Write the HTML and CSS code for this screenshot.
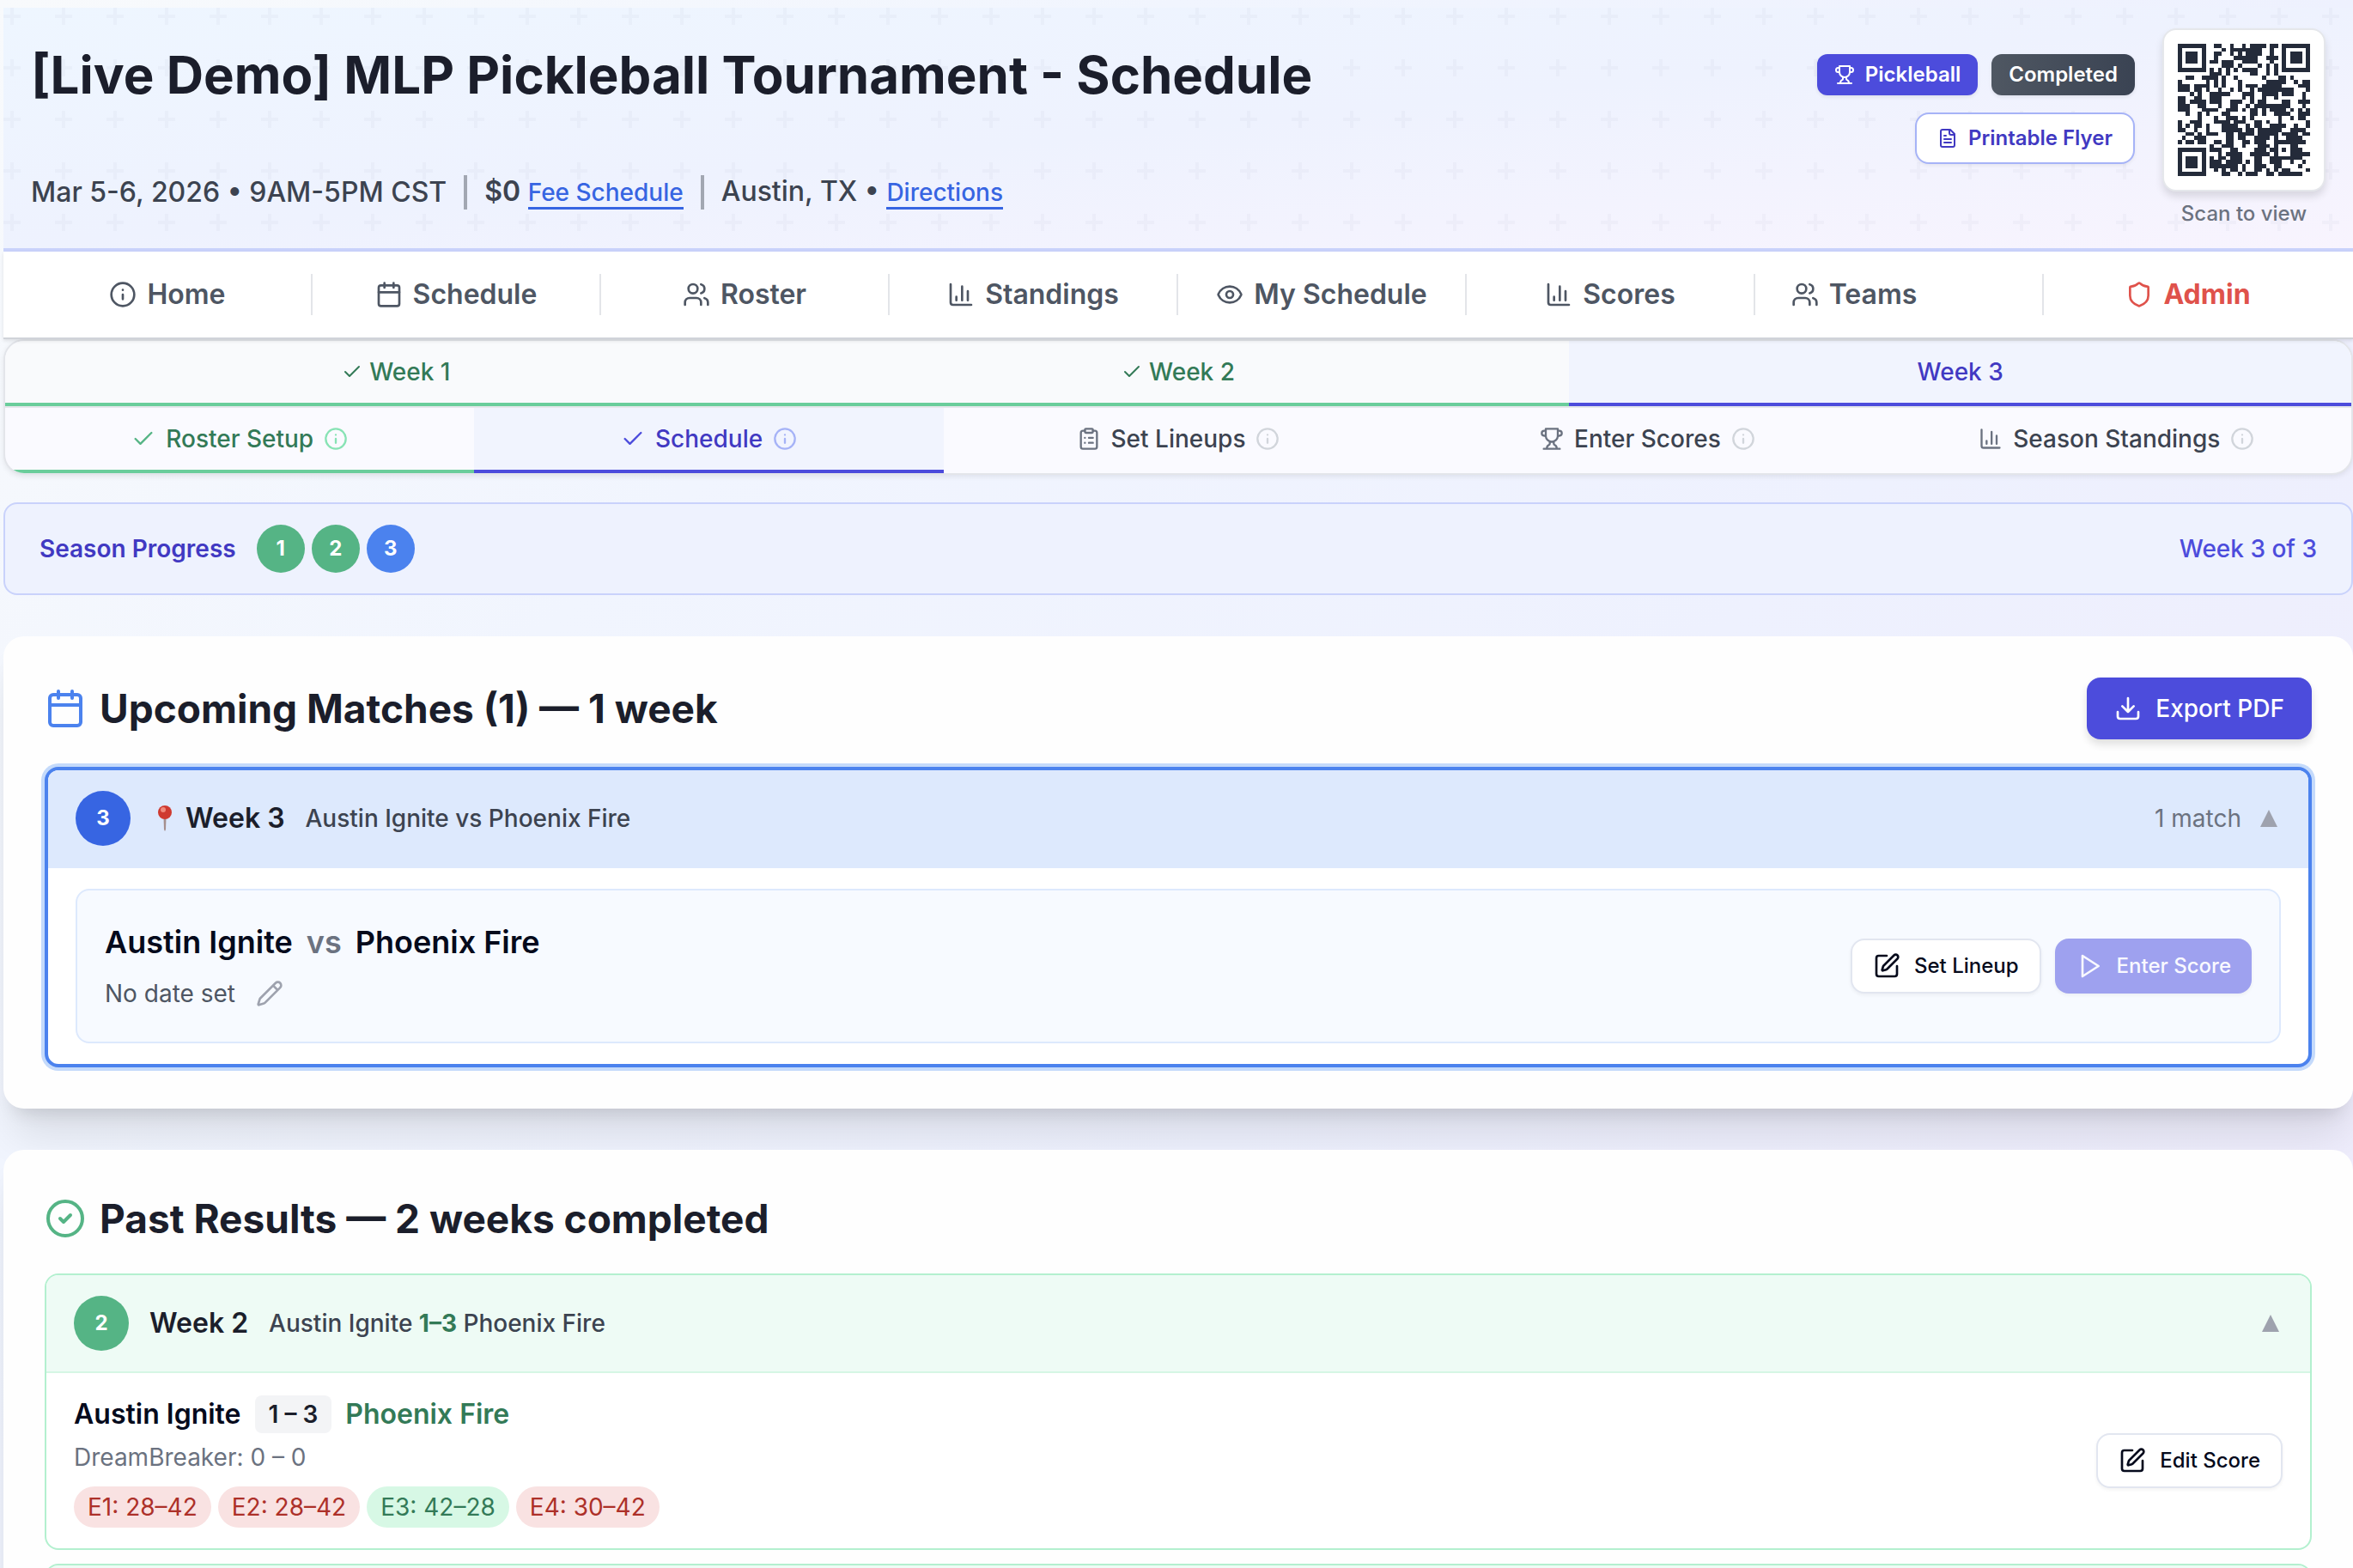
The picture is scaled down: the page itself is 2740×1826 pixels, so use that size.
FILE: index.html
```
<!DOCTYPE html>
<html lang="en">
<head>
    <meta charset="UTF-8">
    <meta name="viewport" content="width=device-width, initial-scale=1.0">
    <title>[Live Demo] MLP Pickleball Tournament - Schedule</title>
    <link rel="stylesheet" href="styles.css">
</head>
<body>
    <!-- Icon sprite -->
    <svg class="sprite" aria-hidden="true">
        <symbol id="i-info" viewBox="0 0 24 24"><circle cx="12" cy="12" r="10"/><path d="M12 16v-4M12 8h.01"/></symbol>
        <symbol id="i-calendar" viewBox="0 0 24 24"><path d="M8 2v4M16 2v4M3 10h18"/><rect x="3" y="4" width="18" height="18" rx="2"/></symbol>
        <symbol id="i-users" viewBox="0 0 24 24"><path d="M16 21v-2a4 4 0 0 0-4-4H6a4 4 0 0 0-4 4v2M22 21v-2a4 4 0 0 0-3-3.87M16 3.13a4 4 0 0 1 0 7.75"/><circle cx="9" cy="7" r="4"/></symbol>
        <symbol id="i-chart" viewBox="0 0 24 24"><path d="M3 3v16a2 2 0 0 0 2 2h16M18 17V9M13 17V5M8 17v-3"/></symbol>
        <symbol id="i-eye" viewBox="0 0 24 24"><path d="M2.062 12.348a1 1 0 0 1 0-.696 10.75 10.75 0 0 1 19.876 0 1 1 0 0 1 0 .696 10.75 10.75 0 0 1-19.876 0"/><circle cx="12" cy="12" r="3"/></symbol>
        <symbol id="i-shield" viewBox="0 0 24 24"><path d="M20 13c0 5-3.5 7.5-7.66 8.95a1 1 0 0 1-.67-.01C7.5 20.5 4 18 4 13V6a1 1 0 0 1 1-1c2 0 4.5-1.2 6.24-2.72a1.17 1.17 0 0 1 1.52 0C14.51 3.81 17 5 19 5a1 1 0 0 1 1 1z"/></symbol>
        <symbol id="i-check" viewBox="0 0 24 24"><path d="M20 6 9 17l-5-5"/></symbol>
        <symbol id="i-clipboard" viewBox="0 0 24 24"><rect x="8" y="2" width="8" height="4" rx="1"/><path d="M16 4h2a2 2 0 0 1 2 2v14a2 2 0 0 1-2 2H6a2 2 0 0 1-2-2V6a2 2 0 0 1 2-2h2M12 11h4M12 16h4M8 11h.01M8 16h.01"/></symbol>
        <symbol id="i-trophy" viewBox="0 0 24 24"><path d="M6 9H4.500a2.500 2.500 0 0 1 0-5H6M18 9h1.500a2.500 2.500 0 0 0 0-5H18M4 22h16M10 14.660V17c0 .55-.47.98-.97 1.210C7.850 18.750 7 20.240 7 22M14 14.660V17c0 .55.47.98.97 1.210C16.150 18.750 17 20.240 17 22M18 2H6v7a6 6 0 0 0 12 0V2Z"/></symbol>
        <symbol id="i-file" viewBox="0 0 24 24"><path d="M15 2H6a2 2 0 0 0-2 2v16a2 2 0 0 0 2 2h12a2 2 0 0 0 2-2V7ZM14 2v4a2 2 0 0 0 2 2h4M10 9H8M16 13H8M16 17H8"/></symbol>
        <symbol id="i-download" viewBox="0 0 24 24"><path d="M21 15v4a2 2 0 0 1-2 2H5a2 2 0 0 1-2-2v-4M7 10l5 5 5-5M12 15V3"/></symbol>
        <symbol id="i-edit" viewBox="0 0 24 24"><path d="M12 3H5a2 2 0 0 0-2 2v14a2 2 0 0 0 2 2h14a2 2 0 0 0 2-2v-7M18.375 2.625a1 1 0 0 1 3 3l-9.013 9.014a2 2 0 0 1-.853.505l-2.873.84a.5.5 0 0 1-.62-.62l.84-2.873a2 2 0 0 1 .506-.852z"/></symbol>
        <symbol id="i-pencil" viewBox="0 0 24 24"><path d="M21.174 6.812a1 1 0 0 0-3.986-3.987L3.842 16.174a2 2 0 0 0-.5.83l-1.321 4.352a.5.5 0 0 0 .623.622l4.353-1.320a2 2 0 0 0 .83-.497zM15 5l4 4"/></symbol>
        <symbol id="i-play" viewBox="0 0 24 24"><path d="m6 3 14 9-14 9z"/></symbol>
        <symbol id="i-done" viewBox="0 0 24 24"><circle cx="12" cy="12" r="10"/><path d="m9 12 2 2 4-4"/></symbol>
        <symbol id="i-up" viewBox="0 0 28 28"><path d="M14 4 24 24H4z" fill="currentColor" stroke="none"/></symbol>
    </svg>

    <header class="header">
        <div class="header-info">
            <h1 class="title">[Live Demo] MLP Pickleball Tournament - Schedule</h1>
            <div class="details">
                <span>Mar 5-6, 2026 • 9AM-5PM CST</span>
                <span class="bar"></span>
                <span><span class="fee">$0</span> <a class="link" href="#fees">Fee Schedule</a></span>
                <span class="bar"></span>
                <span>Austin, TX • <a class="link" href="#directions">Directions</a></span>
            </div>
        </div>
        <div class="header-side">
            <div class="badges">
                <div class="badge-row">
                    <span class="badge badge-sport"><svg class="icon icon-sm"><use href="#i-trophy"/></svg>Pickleball</span>
                    <span class="badge badge-done">Completed</span>
                </div>
                <a class="flyer" href="#flyer"><svg class="icon icon-sm"><use href="#i-file"/></svg>Printable Flyer</a>
            </div>
            <div class="qr">
                <div class="qr-box">
                    <svg class="qr-code" viewBox="0 0 33 33" shape-rendering="crispEdges" role="img" aria-label="QR code">
                        <path class="qr-eye" d="M.5 .5h6v6h-6zM26.5 .5h6v6h-6zM.5 26.5h6v6h-6zM24.500 24.500h4v4h-4z"/>
                        <path class="qr-dot" d="M2 2h3v3H2zM28 2h3v3h-3zM2 28h3v3H2zM26 26h1v1h-1z"/>
                        <path class="qr-eye" transform="translate(0 .5)" d="M9 0h2M13 0h1M16 0h1M18 0h4M23 0h2
                            M11 1h1M13 1h8M23 1h1
                            M9 2h2M13 2h1M15 2h1M17 2h4M23 2h1
                            M9 3h1M14 3h6M22 3h3
                            M8 4h2M11 4h3M16 4h4M23 4h1
                            M11 5h3M15 5h1M20 5h1M22 5h1M24 5h1
                            M8 6h1M10 6h1M12 6h1M14 6h1M16 6h4M22 6h1M24 6h1
                            M8 7h2M10 7h1M12 7h1M18 7h2M22 7h1M24 7h1
                            M2 8h2M6 8h4M11 8h1M14 8h1M21 8h1M25 8h2M28 8h1
                            M0 9h1M7 9h1M9 9h1M11 9h1M15 9h1M22 9h5M29 9h1M31 9h2
                            M0 10h3M4 10h4M9 10h1M11 10h1M15 10h1M17 10h3M21 10h5M30 10h3
                            M0 11h3M4 11h2M7 11h1M10 11h1M13 11h1M15 11h1M18 11h1M20 11h9M32 11h1
                            M3 12h1M5 12h1M8 12h3M11 12h2M16 12h3M21 12h4M26 12h3M31 12h1
                            M0 13h2M4 13h2M8 13h3M16 13h1M18 13h1M21 13h1M24 13h1M31 13h1
                            M0 14h2M3 14h4M8 14h3M13 14h3M18 14h1M20 14h2M26 14h2M30 14h3
                            M0 15h3M5 15h2M10 15h1M13 15h2M17 15h1M19 15h9M31 15h1
                            M0 16h3M6 16h4M12 16h3M16 16h1M18 16h2M21 16h1M23 16h4M28 16h1M30 16h1M32 16h1
                            M2 17h1M5 17h1M7 17h1M11 17h2M18 17h2M21 17h1M24 17h4M30 17h3
                            M5 18h1M9 18h1M12 18h3M16 18h1M18 18h1M25 18h1M28 18h1M30 18h2
                            M0 19h1M3 19h3M9 19h4M14 19h3M19 19h2M22 19h1M25 19h1M32 19h1
                            M0 20h1M2 20h1M4 20h2M7 20h1M11 20h4M17 20h1M19 20h2M23 20h4M29 20h1M32 20h1
                            M0 21h2M4 21h1M7 21h1M11 21h4M15 21h1M17 21h2M20 21h6M28 21h4
                            M2 22h2M5 22h1M7 22h3M12 22h2M15 22h4M20 22h5M26 22h4M31 22h2
                            M1 23h1M4 23h3M12 23h2M15 23h2M19 23h4M24 23h1M27 23h4
                            M0 24h1M2 24h2M5 24h2M9 24h2M12 24h2M16 24h2M19 24h3M29 24h3
                            M8 25h1M11 25h3M16 25h1M20 25h3M29 25h1
                            M8 26h2M10 26h1M13 26h2M19 26h3M23 26h1M29 26h2
                            M10 27h1M12 27h4M18 27h5M29 27h4
                            M8 28h1M10 28h2M13 28h3M19 28h2M23 28h1M29 28h2
                            M8 29h3M12 29h4M17 29h1M19 29h2M23 29h3M28 29h1M31 29h1
                            M8 30h3M11 30h4M16 30h1M19 30h3M24 30h2M30 30h1
                            M9 31h1M11 31h1M13 31h2M16 31h1M19 31h2M22 31h1M24 31h1M26 31h2M32 31h1
                            M11 32h2M15 32h1M17 32h3M22 32h2M25 32h6"/>
                    </svg>
                </div>
                <span class="qr-label">Scan to view</span>
            </div>
        </div>
    </header>

    <nav class="nav">
        <a class="nav-item" href="#home"><svg class="icon icon-lg"><use href="#i-info"/></svg>Home</a>
        <a class="nav-item" href="#schedule"><svg class="icon icon-lg"><use href="#i-calendar"/></svg>Schedule</a>
        <a class="nav-item" href="#roster"><svg class="icon icon-lg"><use href="#i-users"/></svg>Roster</a>
        <a class="nav-item" href="#standings"><svg class="icon icon-lg"><use href="#i-chart"/></svg>Standings</a>
        <a class="nav-item" href="#my-schedule"><svg class="icon icon-lg"><use href="#i-eye"/></svg>My Schedule</a>
        <a class="nav-item" href="#scores"><svg class="icon icon-lg"><use href="#i-chart"/></svg>Scores</a>
        <a class="nav-item nav-teams" href="#teams"><svg class="icon icon-lg"><use href="#i-users"/></svg>Teams</a>
        <a class="nav-item nav-admin" href="#admin"><svg class="icon icon-lg"><use href="#i-shield"/></svg>Admin</a>
    </nav>

    <main class="main">
        <section class="steps">
            <div class="weeks">
                <button class="week done"><svg class="icon icon-sm"><use href="#i-check"/></svg>Week 1</button>
                <button class="week done"><svg class="icon icon-sm"><use href="#i-check"/></svg>Week 2</button>
                <button class="week active">Week 3</button>
            </div>
            <div class="tabs">
                <button class="tab done"><svg class="icon icon-md"><use href="#i-check"/></svg>Roster Setup<svg class="icon icon-md hint"><use href="#i-info"/></svg></button>
                <button class="tab active"><svg class="icon icon-md"><use href="#i-check"/></svg>Schedule<svg class="icon icon-md hint"><use href="#i-info"/></svg></button>
                <button class="tab"><svg class="icon icon-md"><use href="#i-clipboard"/></svg>Set Lineups<svg class="icon icon-md hint"><use href="#i-info"/></svg></button>
                <button class="tab"><svg class="icon icon-md"><use href="#i-trophy"/></svg>Enter Scores<svg class="icon icon-md hint"><use href="#i-info"/></svg></button>
                <button class="tab"><svg class="icon icon-md"><use href="#i-chart"/></svg>Season Standings<svg class="icon icon-md hint"><use href="#i-info"/></svg></button>
            </div>
        </section>

        <section class="progress">
            <span class="progress-label">Season Progress</span>
            <span class="dots">
                <span class="dot">1</span>
                <span class="dot">2</span>
                <span class="dot dot-current">3</span>
            </span>
            <span class="progress-count">Week 3 of 3</span>
        </section>

        <!-- Upcoming -->
        <section class="card">
            <div class="card-head">
                <h2 class="card-title"><svg class="icon icon-xl blue"><use href="#i-calendar"/></svg>Upcoming Matches (1) — 1 week</h2>
                <button class="btn-export"><svg class="icon icon-lg"><use href="#i-download"/></svg>Export PDF</button>
            </div>
            <div class="group group-current">
                <button class="group-head">
                    <span class="number">3</span>
                    <span class="group-name">
                        <svg class="pin" viewBox="0 0 32 32">
                            <path d="M14.500 15h3l-.5 14-1 2-1-2z" fill="#a58f8d"/>
                            <circle cx="16" cy="9" r="8" fill="#cf3a30"/>
                            <circle cx="14" cy="6" r="3" fill="#f08a7c"/>
                        </svg>Week 3</span>
                    <span class="group-text">Austin Ignite vs Phoenix Fire</span>
                    <span class="group-side">1 match <svg class="icon icon-md caret"><use href="#i-up"/></svg></span>
                </button>
                <div class="group-body">
                    <div class="match">
                        <div>
                            <div class="teams"><span>Austin Ignite</span><span class="vs">vs</span><span>Phoenix Fire</span></div>
                            <div class="date">No date set <button class="btn-icon" aria-label="Edit date"><svg class="icon icon-lg"><use href="#i-pencil"/></svg></button></div>
                        </div>
                        <div class="actions">
                            <button class="btn"><svg class="icon icon-lg"><use href="#i-edit"/></svg>Set Lineup</button>
                            <button class="btn btn-score" disabled><svg class="icon icon-lg"><use href="#i-play"/></svg>Enter Score</button>
                        </div>
                    </div>
                </div>
            </div>
        </section>

        <!-- Past results -->
        <section class="card">
            <div class="card-head">
                <h2 class="card-title"><svg class="icon icon-xl green"><use href="#i-done"/></svg>Past Results — 2 weeks completed</h2>
            </div>
            <div class="group group-past">
                <button class="group-head">
                    <span class="number">2</span>
                    <span class="group-name">Week 2</span>
                    <span class="group-text">Austin Ignite <b>1–3</b> Phoenix Fire</span>
                    <span class="group-side"><svg class="icon icon-md caret"><use href="#i-up"/></svg></span>
                </button>
                <div class="result">
                    <div>
                        <div class="result-teams"><span>Austin Ignite</span><span class="score">1 – 3</span><span class="winner">Phoenix Fire</span></div>
                        <div class="breaker">DreamBreaker: 0 – 0</div>
                        <div class="pills">
                            <span class="pill">E1: 28–42</span>
                            <span class="pill">E2: 28–42</span>
                            <span class="pill pill-won">E3: 42–28</span>
                            <span class="pill">E4: 30–42</span>
                        </div>
                    </div>
                    <button class="btn"><svg class="icon icon-lg"><use href="#i-edit"/></svg>Edit Score</button>
                </div>
            </div>
            <div class="group group-past">
                <button class="group-head" aria-label="Next week">
                    <span class="number"></span>
                </button>
            </div>
        </section>
    </main>
</body>
</html>
```
FILE: styles.css
```
* {
    margin: 0;
    padding: 0;
    box-sizing: border-box;
}

body {
    font-family: Inter, "Liberation Sans", sans-serif;
    font-size: 28px;
    line-height: 40px;
    color: #1b1e2b;
    background: linear-gradient(135deg, #f8fafc, #f1f5fe 30%, #eef1fe 60%, #eeebfb);
    height: 100vh;
    overflow: hidden;
    padding: 9px 0 0 4px;
}

button {
    font: inherit;
    color: inherit;
    border: none;
    background: none;
    cursor: pointer;
}

a {
    text-decoration: none;
}

.sprite {
    display: none;
}

.icon {
    flex-shrink: 0;
    fill: none;
    stroke: currentColor;
    stroke-width: 2;
    stroke-linecap: round;
    stroke-linejoin: round;
}

.icon-sm { width: 24px; height: 24px; }
.icon-md { width: 28px; height: 28px; }
.icon-lg { width: 32px; height: 32px; }
.icon-xl { width: 48px; height: 48px; }

.blue { color: #4b82ee; }
.green { color: #55b485; }

/* Header */
.header {
    display: flex;
    justify-content: space-between;
    padding: 24px 32px;
    border-bottom: 4px solid #c9d2fb;
    background:
        url("data:image/svg+xml,%3Csvg xmlns='http://www.w3.org/2000/svg' width='60' height='60'%3E%3Cpath d='M8 0h4v8h8v4h-8v8H8v-8H0V8h8z' fill='%23787896' fill-opacity='.05'/%3E%3C/svg%3E"),
        linear-gradient(to bottom right, #eef6ff, #eef2fe 50%, #f8f4fe);
}

.title {
    font-size: 60px;
    line-height: 108px;
    font-weight: 700;
}

.details {
    display: flex;
    align-items: center;
    gap: 20px;
    margin-top: 58px;
    font-size: 32px;
    line-height: 48px;
    font-weight: 500;
    color: #3c4350;
}

.fee {
    font-weight: 600;
}

.bar {
    width: 4px;
    height: 40px;
    background-color: #a2a7b2;
}

.link {
    font-size: 28px;
    color: #3765e2;
    border-bottom: 3px solid #3765e2;
}

.header-side {
    display: flex;
    gap: 32px;
}

.badges {
    display: flex;
    flex-direction: column;
    align-items: flex-end;
    gap: 20px;
    padding-top: 30px;
}

.badge-row {
    display: flex;
    gap: 16px;
}

.badge,
.flyer {
    display: flex;
    align-items: center;
    gap: 12px;
    font-size: 24px;
    line-height: 32px;
    font-weight: 600;
}

.badge {
    padding: 8px 20px;
    border-radius: 12px;
    color: #fff;
    box-shadow: 0 2px 4px rgba(0, 0, 0, 0.08);
}

.badge-sport {
    background-color: #4c4cdc;
}

.badge-done {
    background: linear-gradient(to right, #4f5762, #3a4353);
}

.flyer {
    padding: 12px 24px;
    border: 2px solid #a6b3f7;
    border-radius: 16px;
    background-color: #fff;
    color: #4139c2;
    box-shadow: 0 2px 4px rgba(0, 0, 0, 0.06);
}

.qr {
    display: flex;
    flex-direction: column;
    align-items: center;
    gap: 10px;
}

.qr-box {
    padding: 16px;
    border: 2px solid #e5e7eb;
    border-radius: 16px;
    background-color: #fff;
    box-shadow: 0 6px 10px rgba(0, 0, 0, 0.12);
}

.qr-code {
    display: block;
    width: 154px;
    height: 154px;
}

.qr-eye {
    fill: none;
    stroke: #242b3a;
    stroke-width: 1;
}

.qr-dot {
    fill: #242b3a;
}

.qr-label {
    font-size: 24px;
    line-height: 32px;
    font-weight: 500;
    color: #6b7280;
}

/* Navigation */
.nav {
    display: grid;
    grid-template-columns: repeat(8, 1fr);
    padding: 26px 24px;
    background-color: #fff;
    border-bottom: 2px solid #d0d3d9;
    box-shadow: 0 2px 4px rgba(0, 0, 0, 0.1);
    position: relative;
}

.nav-item {
    display: flex;
    align-items: center;
    justify-content: center;
    gap: 12px;
    font-size: 32px;
    line-height: 48px;
    font-weight: 600;
    color: #4e5663;
    border-right: 2px solid #e3e5e9;
}

.nav-teams {
    padding-right: 104px;
}

.nav-admin {
    color: #df524b;
    font-weight: 700;
    border-right: none;
}

/* Week and step tabs */
.steps {
    border: 2px solid #e3e5ea;
    border-radius: 24px;
    overflow: hidden;
    background-color: #fafaff;
    box-shadow: 0 2px 6px rgba(0, 0, 0, 0.08);
}

.weeks {
    display: grid;
    grid-template-columns: repeat(3, 1fr);
    background-color: #f9fafc;
    border-bottom: 2px solid #e5e7eb;
}

.tabs {
    display: grid;
    grid-template-columns: repeat(5, 1fr);
}

.week,
.tab {
    display: flex;
    align-items: center;
    justify-content: center;
    gap: 12px;
    padding: 16px;
    font-weight: 500;
    color: #3c4350;
    border-bottom: 4px solid transparent;
}

.week {
    gap: 8px;
}

.tab .icon {
    color: #6b7280;
}

.tab .hint {
    color: #d1d5db;
}

.week.done,
.tab.done {
    color: #337a57;
    border-bottom-color: #6acd9b;
}

.week.active,
.tab.active {
    color: #4139c2;
    border-bottom-color: #4c4cdc;
    background-color: #f1f4fe;
}

.tab.done .icon { color: #55b485; }
.tab.done .hint { color: #88e3b5; }
.tab.active .icon { color: #4c4cdc; }
.tab.active .hint { color: #a6b3f7; }

/* Season progress */
.progress {
    display: flex;
    align-items: center;
    gap: 24px;
    margin-top: 32px;
    padding: 24px 40px;
    border: 2px solid #c9d2fb;
    border-radius: 16px;
    background-color: #eef2fe;
    font-weight: 500;
    color: #4c4cdc;
}

.progress-label {
    font-weight: 600;
    color: #4139c2;
}

.dots {
    display: flex;
    gap: 8px;
}

.dot,
.number {
    display: flex;
    align-items: center;
    justify-content: center;
    border-radius: 50%;
    font-size: 24px;
    font-weight: 700;
    color: #fff;
    background-color: #55b485;
}

.dot {
    width: 56px;
    height: 56px;
}

.dot-current {
    background-color: #4b82ee;
}

.progress-count {
    margin-left: auto;
}

/* Cards */
.card {
    margin-top: 48px;
    padding: 48px;
    border-radius: 24px;
    background-color: #fefefe;
    box-shadow: 0 40px 50px -10px rgba(0, 0, 0, 0.1), 0 16px 20px -12px rgba(0, 0, 0, 0.12);
}

.card-head {
    display: flex;
    align-items: center;
    justify-content: space-between;
    margin-bottom: 32px;
}

.card-title {
    display: flex;
    align-items: center;
    gap: 16px;
    font-size: 46px;
    line-height: 64px;
    font-weight: 700;
}

.btn-export {
    display: flex;
    align-items: center;
    gap: 16px;
    padding: 16px 32px;
    border-radius: 16px;
    background-color: #4c4cdc;
    color: #fff;
    font-weight: 500;
    box-shadow: 0 6px 10px rgba(0, 0, 0, 0.12);
}

.group {
    border: 2px solid #b3f0cf;
    border-radius: 16px;
    overflow: hidden;
    background-color: #fff;
}

.group + .group {
    margin-top: 16px;
}

.group-current {
    border: 4px solid #4b82ee;
    box-shadow: 0 0 0 4px #c4dafb;
}

.group-head {
    display: flex;
    align-items: center;
    gap: 24px;
    width: 100%;
    padding: 24px 32px;
    text-align: left;
    background-color: #eefbf5;
    border-bottom: 2px solid #d5f6e4;
}

.group-current .group-head {
    background-color: #dde9fd;
    border-bottom-color: #dde9fd;
}

.number {
    width: 64px;
    height: 64px;
}

.group-current .number {
    background-color: #3765e2;
}

.group-name {
    display: flex;
    align-items: center;
    gap: 8px;
    font-size: 32px;
    font-weight: 600;
}

.pin {
    width: 32px;
    height: 32px;
}

.group-text {
    font-weight: 500;
    color: #3c4350;
}

.group-text b {
    color: #337a57;
}

.group-side {
    display: flex;
    align-items: center;
    gap: 18px;
    margin-left: auto;
    color: #6b7280;
}

.caret {
    color: #9ea2ae;
}

.group-body {
    padding: 24px 32px;
}

.match {
    display: flex;
    align-items: center;
    justify-content: space-between;
    padding: 32px;
    border: 2px solid #dde9fd;
    border-radius: 16px;
    background-color: #f7faff;
}

.teams {
    display: flex;
    gap: 16px;
    font-size: 36px;
    line-height: 56px;
    font-weight: 600;
    color: #050a1c;
}

.vs {
    color: #6b7280;
}

.date {
    display: flex;
    align-items: center;
    gap: 16px;
    margin-top: 8px;
    color: #4e5663;
}

.btn-icon {
    display: flex;
    padding: 8px;
    color: #9ea2ae;
}

.actions {
    display: flex;
    gap: 16px;
}

.btn {
    display: flex;
    align-items: center;
    gap: 16px;
    padding: 14px 24px;
    border: 2px solid #e2e6f0;
    border-radius: 16px;
    background-color: #fff;
    color: #050a1c;
    font-size: 24px;
    line-height: 32px;
    font-weight: 500;
    box-shadow: 0 2px 4px rgba(0, 0, 0, 0.05);
}

.btn-score {
    padding: 16px 24px;
    border: none;
    background-color: #9ea1ef;
    color: #f9f9ff;
}

/* Finished matches */
.result {
    display: flex;
    align-items: center;
    justify-content: space-between;
    padding: 24px 32px;
}

.result-teams {
    display: flex;
    align-items: center;
    gap: 16px;
    font-size: 32px;
    line-height: 48px;
    font-weight: 600;
    color: #050a1c;
}

.score {
    padding: 2px 16px;
    border-radius: 8px;
    background-color: #f3f4f6;
    font-size: 28px;
    line-height: 40px;
    color: #1b1e2b;
}

.winner {
    color: #337a57;
}

.breaker {
    margin-top: 4px;
    line-height: 44px;
    color: #6b7280;
}

.pills {
    display: flex;
    gap: 8px;
    margin-top: 12px;
}

.pill {
    padding: 4px 16px;
    border-radius: 24px;
    background-color: #f9e2e2;
    color: #ad3029;
}

.pill-won {
    background-color: #d7f8e5;
    color: #337a57;
}
```
